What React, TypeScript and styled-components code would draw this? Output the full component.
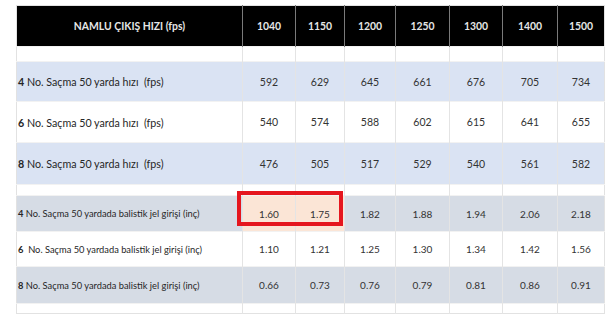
import React from "react";
import styled, { createGlobalStyle } from "styled-components";

const Global = createGlobalStyle`
  html, body { margin: 0; padding: 0; background: #ffffff; }
  body { font-family: Lato, "Open Sans", "Liberation Sans", sans-serif; }
`;

const Page = styled.div`
  padding: 5px 0 0 16px;
  width: 606px;
  height: 324px;
  box-sizing: border-box;
  overflow: hidden;
`;

const Wrap = styled.div`
  position: relative;
  width: 581px;
`;

const Table = styled.table`
  border-collapse: collapse;
  table-layout: fixed;
  width: 581px;
  border: 1px solid #e2e2e2;
`;

const HeadCell = styled.th<{ $w: number }>`
  width: ${(p) => p.$w}px;
  height: 40px;
  padding: 0;
  background: #000;
  color: #e6e6e6;
  font-size: 10.4px;
  font-weight: 700;
  text-align: center;
  border-left: 1px solid #7a7a7a;
  &:first-child { border-left: none; }
`;

type Tone = "white" | "blue" | "gray";
const toneBg: Record<Tone, string> = {
  white: "#ffffff",
  blue: "#dae3f3",
  gray: "#d6dce5",
};

const Row = styled.tr<{ $h: number; $tone: Tone }>`
  height: ${(p) => p.$h}px;
  background: ${(p) => toneBg[p.$tone]};
`;

const LabelCell = styled.td<{ $small?: boolean }>`
  padding: 0 0 0 1px;
  font-size: ${(p) => (p.$small ? "9.3px" : "10.7px")};
  color: #262626;
  white-space: pre;
  border-right: 1px solid #e4e4e4;
  border-top: 1px solid #f2f2f2;
  b { font-weight: 700; }
`;

const NumCell = styled.td<{ $hi?: boolean; $small?: boolean }>`
  padding: 0;
  text-align: center;
  font-size: ${(p) => (p.$small ? "10px" : "10.5px")};
  color: #333;
  border-left: 1px solid #e4e4e4;
  border-top: 1px solid #f2f2f2;
  background: ${(p) => (p.$hi ? "#fbe5d6" : "transparent")};
`;

const Mark = styled.div`
  position: absolute;
  left: 221px;
  top: 186px;
  width: 106px;
  height: 35px;
  box-sizing: border-box;
  border: 4px solid #e5161e;
  pointer-events: none;
`;

const speeds = ["1040", "1150", "1200", "1250", "1300", "1400", "1500"];
const widths = [52, 48, 50, 53, 52, 54, 46];

type DataRow = { n: string; label: string; vals: string[]; h: number; tone: Tone; small?: boolean; hi?: number[] };

const rows: (DataRow | { blank: number; tone: Tone })[] = [
  { blank: 15, tone: "white" },
  { n: "4", label: " No. Saçma 50 yarda hızı  (fps)", vals: ["592", "629", "645", "661", "676", "705", "734"], h: 40, tone: "blue" },
  { n: "6", label: " No. Saçma 50 yarda hızı  (fps)", vals: ["540", "574", "588", "602", "615", "641", "655"], h: 41, tone: "white" },
  { n: "8", label: " No. Saçma 50 yarda hızı  (fps)", vals: ["476", "505", "517", "529", "540", "561", "582"], h: 42, tone: "blue" },
  { blank: 11, tone: "white" },
  { n: "4", label: " No. Saçma 50 yardada balistik jel girişi (inç)", vals: ["1.60", "1.75", "1.82", "1.88", "1.94", "2.06", "2.18"], h: 36, tone: "gray", small: true, hi: [0, 1] },
  { n: "6", label: "  No. Saçma 50 yardada balistik jel girişi (inç)", vals: ["1.10", "1.21", "1.25", "1.30", "1.34", "1.42", "1.56"], h: 35, tone: "white", small: true },
  { n: "8", label: " No. Saçma 50 yardada balistik jel girişi (inç)", vals: ["0.66", "0.73", "0.76", "0.79", "0.81", "0.86", "0.91"], h: 37, tone: "gray", small: true },
  { blank: 10, tone: "white" },
];

export default function App() {
  return (
    <>
      <Global />
      <Page>
        <Wrap>
          <Table>
            <thead>
              <tr>
                <HeadCell $w={225}>NAMLU ÇIKIŞ HIZI (fps)</HeadCell>
                {speeds.map((s, i) => (
                  <HeadCell key={s} $w={widths[i]}>{s}</HeadCell>
                ))}
              </tr>
            </thead>
            <tbody>
              {rows.map((r, idx) =>
                "blank" in r ? (
                  <Row key={idx} $h={r.blank} $tone={r.tone}>
                    <LabelCell />
                    {speeds.map((s) => (
                      <NumCell key={s} />
                    ))}
                  </Row>
                ) : (
                  <Row key={idx} $h={r.h} $tone={r.tone}>
                    <LabelCell $small={r.small}>
                      <b>{r.n}</b>
                      {r.label}
                    </LabelCell>
                    {r.vals.map((v, i) => (
                      <NumCell key={i} $small={r.small} $hi={r.hi?.includes(i)}>
                        {v}
                      </NumCell>
                    ))}
                  </Row>
                )
              )}
            </tbody>
          </Table>
          <Mark />
        </Wrap>
      </Page>
    </>
  );
}
